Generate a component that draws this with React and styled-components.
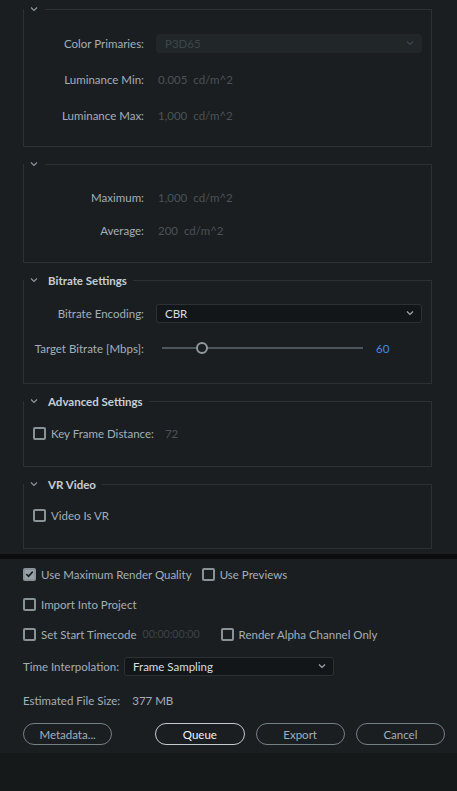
import React from 'react'
import styled, { createGlobalStyle } from 'styled-components'

const colors = {
  bg: '#1b1e20',
  footer: '#161919',
  border: '#2c3134',
  label: '#a2afbb',
  heading: '#c5ced5',
  dim: '#4a5257',
  text: '#d6dde2',
  accent: '#3b8fe3',
}

const GlobalStyle = createGlobalStyle`
  html, body {
    margin: 0;
    padding: 0;
    background: ${colors.bg};
  }
  body {
    font-family: Lato, "Open Sans", sans-serif;
    font-size: 11.5px;
    color: ${colors.label};
  }
`

const Page = styled.div`
  width: 457px;
  height: 791px;
  display: flex;
  flex-direction: column;
  background: ${colors.bg};
  overflow: hidden;
`

const Settings = styled.div`
  display: flex;
  flex-direction: column;
  gap: 10px;
  padding: 2px 25px 5px 23px;
`

const Section = styled.fieldset`
  margin: 0;
  padding: 0 9px 0 0;
  border: 1px solid ${colors.border};
  min-width: 0;
`

const Legend = styled.legend`
  display: flex;
  align-items: center;
  gap: 9px;
  padding: 0 6px 0 5px;
  margin-left: 0;
  height: 14px;
  color: ${colors.heading};
  font-weight: 700;
  font-size: 11.5px;
`

const Chevron = ({ color = '#8d979d', size = 10 }) => (
  <svg width={size} height={size} viewBox="0 0 10 10">
    <path d="M2 3.5 L5 6.5 L8 3.5" fill="none" stroke={color} strokeWidth="1.2" />
  </svg>
)

const Body = styled.div`
  display: flex;
  flex-direction: column;
  gap: ${p => p.gap ?? 15}px;
  padding-top: ${p => p.top || 0}px;
  padding-bottom: ${p => p.bottom || 0}px;
`

const Row = styled.div`
  display: grid;
  grid-template-columns: 120px 1fr;
  column-gap: 12px;
  align-items: center;
  height: 20px;
`

const Label = styled.span`
  text-align: right;
  white-space: nowrap;
  color: ${colors.label};
`

const Value = styled.span`
  color: ${p => p.color || colors.dim};
  padding-left: ${p => p.pad ?? 2}px;
  font-size: ${p => p.size || 11.5}px;
  word-spacing: 3px;
`

const Select = styled.div`
  display: flex;
  align-items: center;
  justify-content: space-between;
  height: 19px;
  padding: 0 6px 0 8px;
  border-radius: 3px;
  background: ${p => (p.disabled ? '#212628' : '#131618')};
  border: 1px solid ${p => (p.disabled ? '#212628' : '#2c3134')};
  color: ${p => (p.disabled ? '#3e464b' : colors.text)};
  width: ${p => p.width || 'auto'};
  box-sizing: border-box;
`

const Slider = styled.div`
  display: flex;
  align-items: center;
  gap: 13px;
  padding-left: 6px;
`

const Track = styled.div`
  position: relative;
  width: 201px;
  height: 2px;
  background: #4d565b;
`

const Thumb = styled.div`
  position: absolute;
  top: -5px;
  width: 8px;
  height: 8px;
  border-radius: 50%;
  border: 2px solid #8e999e;
  background: ${colors.bg};
`

const SliderValue = styled.span`
  color: ${colors.accent};
`

const CheckRow = styled.div`
  display: flex;
  align-items: center;
  gap: ${p => p.gap || 0}px;
  height: 20px;
  padding-left: ${p => p.indent || 0}px;
`

const CheckItem = styled.label`
  display: flex;
  align-items: center;
  gap: 5px;
  color: ${colors.label};
  white-space: nowrap;
`

const Box = styled.span`
  width: 13px;
  height: 13px;
  box-sizing: border-box;
  border-radius: 2px;
  border: 2px solid #889297;
  background: ${p => (p.checked ? '#98a2a7' : 'transparent')};
  display: inline-flex;
  align-items: center;
  justify-content: center;
`

const Checkbox = ({ checked, children, extra }) => (
  <CheckItem>
    <Box checked={checked}>
      {checked && (
        <svg width="10" height="10" viewBox="0 0 10 10">
          <path d="M1.5 5.2 L4 7.6 L8.6 2.4" fill="none" stroke="#1b1e20" strokeWidth="1.8" />
        </svg>
      )}
    </Box>
    {children}
    {extra}
  </CheckItem>
)

const Divider = styled.div`
  height: 5px;
  background: #0b0d0e;
`

const Lower = styled.div`
  display: flex;
  flex-direction: column;
  padding: 5px 12px 0 23px;
  gap: 10px;
`

const InlineRow = styled.div`
  display: flex;
  align-items: center;
  gap: 5px;
  height: 20px;
  margin-top: 2px;
`

const FileSize = styled.div`
  display: flex;
  gap: 12px;
  height: 20px;
  align-items: center;
  margin-top: 4px;
  span + span {
    color: ${colors.label};
  }
`

const Buttons = styled.div`
  display: flex;
  gap: 11px;
  margin-top: 3px;
`

const Button = styled.button`
  width: 90px;
  height: 22px;
  border-radius: 11px;
  background: transparent;
  border: 1px solid ${p => (p.primary ? '#c3cbd0' : '#757f84')};
  color: ${p => (p.primary ? '#f2f5f7' : colors.label)};
  font-family: inherit;
  font-size: 11.5px;
  padding: 0;
  margin-right: ${p => p.spaceAfter || 0}px;
`

const Footer = styled.div`
  flex: 1;
  margin-top: 8px;
  background: ${colors.footer};
`

export default function App() {
  return (
    <Page>
      <GlobalStyle />
      <Settings>
        <Section>
          <Legend><Chevron /></Legend>
          <Body top={17} gap={16} bottom={21}>
            <Row>
              <Label>Color Primaries:</Label>
              <Select disabled>
                <span>P3D65</span>
                <Chevron color="#3e464b" />
              </Select>
            </Row>
            <Row>
              <Label>Luminance Min:</Label>
              <Value>0.005 cd/m^2</Value>
            </Row>
            <Row>
              <Label>Luminance Max:</Label>
              <Value>1,000 cd/m^2</Value>
            </Row>
          </Body>
        </Section>

        <Section>
          <Legend><Chevron /></Legend>
          <Body top={16} gap={13} bottom={22}>
            <Row>
              <Label>Maximum:</Label>
              <Value>1,000 cd/m^2</Value>
            </Row>
            <Row>
              <Label>Average:</Label>
              <Value>200 cd/m^2</Value>
            </Row>
          </Body>
        </Section>

        <Section>
          <Legend><Chevron />Bitrate Settings</Legend>
          <Body top={16} gap={15} bottom={25}>
            <Row>
              <Label>Bitrate Encoding:</Label>
              <Select>
                <span>CBR</span>
                <Chevron color="#a0aab0" />
              </Select>
            </Row>
            <Row>
              <Label>Target Bitrate [Mbps]:</Label>
              <Slider>
                <Track>
                  <Thumb style={{ left: `${(34 / 201) * 100}%` }} />
                </Track>
                <SliderValue>60</SliderValue>
              </Slider>
            </Row>
          </Body>
        </Section>

        <Section>
          <Legend><Chevron />Advanced Settings</Legend>
          <Body top={15} bottom={23}>
            <CheckRow indent={9}>
              <Checkbox extra={<Value pad={6}>72</Value>}>Key Frame Distance:</Checkbox>
            </CheckRow>
          </Body>
        </Section>

        <Section>
          <Legend><Chevron />VR Video</Legend>
          <Body top={14} bottom={23}>
            <CheckRow indent={9}>
              <Checkbox>Video Is VR</Checkbox>
            </CheckRow>
          </Body>
        </Section>
      </Settings>

      <Divider />

      <Lower>
        <CheckRow gap={10}>
          <Checkbox checked>Use Maximum Render Quality</Checkbox>
          <Checkbox>Use Previews</Checkbox>
        </CheckRow>
        <CheckRow>
          <Checkbox>Import Into Project</Checkbox>
        </CheckRow>
        <CheckRow gap={21}>
          <Checkbox extra={<Value color="#3c4347" pad={1} size={10.6}>00:00:00:00</Value>}>Set Start Timecode</Checkbox>
          <Checkbox>Render Alpha Channel Only</Checkbox>
        </CheckRow>
        <InlineRow>
          <span>Time Interpolation:</span>
          <Select width="210px">
            <span>Frame Sampling</span>
            <Chevron color="#a0aab0" />
          </Select>
        </InlineRow>
        <FileSize>
          <span>Estimated File Size:</span>
          <span>377 MB</span>
        </FileSize>
        <Buttons>
          <Button spaceAfter={32}>Metadata...</Button>
          <Button primary>Queue</Button>
          <Button>Export</Button>
          <Button>Cancel</Button>
        </Buttons>
      </Lower>
      <Footer />
    </Page>
  )
}
